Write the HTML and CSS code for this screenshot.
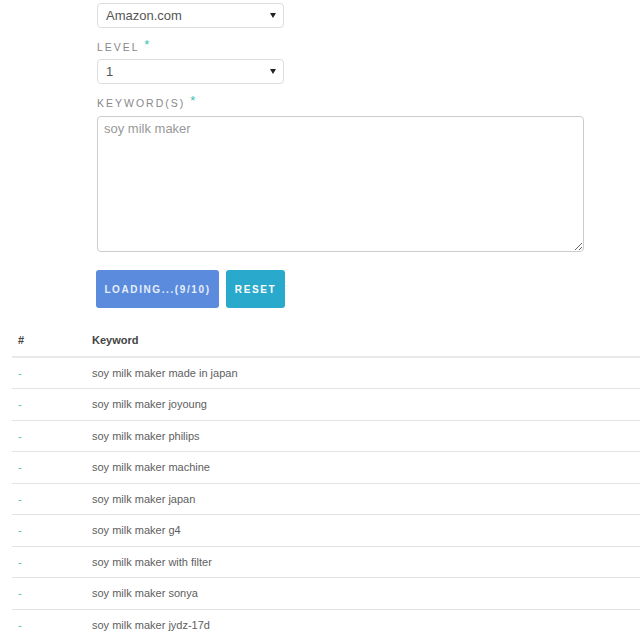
FILE: index.html
```html
<!DOCTYPE html>
<html>
<head>
<meta charset="utf-8">
<link rel="stylesheet" href="styles.css">
</head>
<body>
<form class="form">
  <div class="select-wrap first">
    <select class="select"><option>Amazon.com</option></select>
  </div>
  <label class="label">LEVEL <span class="req">*</span></label>
  <div class="select-wrap">
    <select class="select"><option>1</option></select>
  </div>
  <label class="label">KEYWORD(S) <span class="req">*</span></label>
  <textarea class="textarea" placeholder="soy milk maker"></textarea>
  <div class="buttons">
    <button type="button" class="btn btn-load">LOADING...(9/10)</button>
    <button type="button" class="btn btn-reset">RESET</button>
  </div>
</form>
<table class="results">
  <thead>
    <tr><th class="col-num">#</th><th>Keyword</th></tr>
  </thead>
  <tbody>
    <tr><td class="col-num dash">-</td><td>soy milk maker made in japan</td></tr>
    <tr><td class="col-num dash">-</td><td>soy milk maker joyoung</td></tr>
    <tr><td class="col-num dash">-</td><td>soy milk maker philips</td></tr>
    <tr><td class="col-num dash">-</td><td>soy milk maker machine</td></tr>
    <tr><td class="col-num dash">-</td><td>soy milk maker japan</td></tr>
    <tr><td class="col-num dash">-</td><td>soy milk maker g4</td></tr>
    <tr><td class="col-num dash">-</td><td>soy milk maker with filter</td></tr>
    <tr><td class="col-num dash">-</td><td>soy milk maker sonya</td></tr>
    <tr><td class="col-num dash">-</td><td>soy milk maker jydz-17d</td></tr>
  </tbody>
</table>
</body>
</html>
```
FILE: styles.css
```css
html, body {
  margin: 0;
  padding: 0;
  background: #fff;
  overflow: hidden;
}
body {
  font-family: "Liberation Sans", Arial, sans-serif;
  color: #555;
}
.form {
  margin: 0;
  padding: 0 0 0 97px;
  display: flex;
  flex-direction: column;
  align-items: flex-start;
}
.select-wrap {
  position: relative;
  width: 187px;
  margin-top: 6px;
}
.select-wrap.first {
  margin-top: 3px;
}
.select-wrap::after {
  content: "";
  position: absolute;
  right: 8px;
  top: 10px;
  width: 0;
  height: 0;
  border-left: 3px solid transparent;
  border-right: 3px solid transparent;
  border-top: 5px solid #222;
  pointer-events: none;
}
.select {
  -webkit-appearance: none;
  appearance: none;
  display: block;
  width: 187px;
  height: 25px;
  box-sizing: border-box;
  border: 1px solid #ddd;
  border-radius: 4px;
  background: #fff;
  padding: 0 20px 0 8px;
  font-family: "Liberation Sans", Arial, sans-serif;
  font-size: 13px;
  color: #555;
  margin: 0;
}
.label {
  display: block;
  margin-top: 10px;
  height: 14px;
  line-height: 14px;
  font-size: 10.5px;
  letter-spacing: 2px;
  color: #888;
}
.req {
  color: #3cc2b4;
  font-size: 13px;
  letter-spacing: 0;
  vertical-align: 2px;
}
.label + .select-wrap {
  margin-top: 7px;
}
.textarea {
  display: block;
  margin: 8px 0 0 0;
  width: 487px;
  height: 136px;
  box-sizing: border-box;
  border: 1px solid #ccc;
  border-radius: 4px;
  padding: 4px 6px;
  font-family: "Liberation Sans", Arial, sans-serif;
  font-size: 13px;
  color: #555;
  resize: vertical;
}
.textarea::placeholder {
  color: #999;
}
.buttons {
  display: flex;
  gap: 7px;
  margin-top: 18px;
  margin-left: -1px;
}
.btn {
  height: 38px;
  border: none;
  border-radius: 3px;
  color: #fff;
  font-family: "Liberation Sans", Arial, sans-serif;
  font-weight: bold;
  font-size: 10px;
  letter-spacing: 1.6px;
  padding: 0;
  margin: 0;
}
.btn-load {
  width: 123px;
  background: #5a8bdc;
  color: #e6eefb;
}
.btn-reset {
  width: 59px;
  background: #29a9cb;
}
.results {
  margin: 15px 0 0 12px;
  width: calc(100% - 12px);
  border-collapse: collapse;
  font-size: 11px;
}
.results th {
  text-align: left;
  font-weight: bold;
  color: #444;
  height: 34px;
  padding: 0 6px;
  border-bottom: 2px solid #e8e8e8;
  box-sizing: border-box;
}
.results td {
  height: 31.5px;
  padding: 0 6px;
  border-top: 1px solid #e2e2e2;
  box-sizing: border-box;
  color: #5e5e5e;
}
.results tbody tr:first-child td {
  border-top: none;
}
.col-num {
  width: 74px;
  box-sizing: border-box;
}
.results td.dash {
  color: #3cc2b4;
}
```
